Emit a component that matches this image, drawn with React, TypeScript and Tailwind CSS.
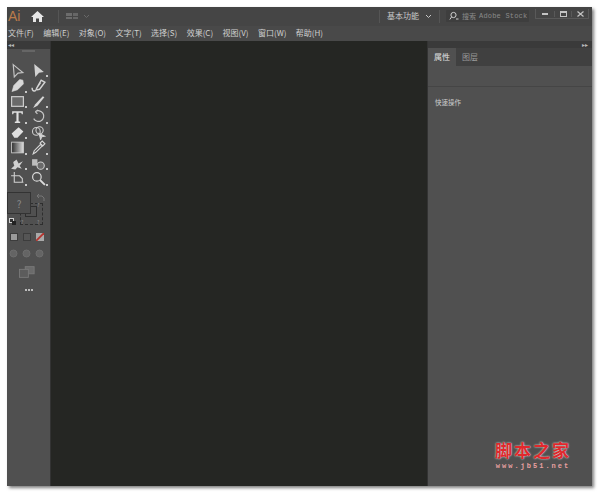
import React from 'react';

const cjk = { fontFamily: '"Noto Sans CJK SC", "Liberation Sans", sans-serif' };

const menus = ['文件(F)', '编辑(E)', '对象(O)', '文字(T)', '选择(S)', '效果(C)', '视图(V)', '窗口(W)', '帮助(H)'];

// two columns of tools, top to bottom
const tools: { icon: React.ReactNode; corner?: boolean }[] = [
  { icon: <path d="M3 1.5 L12 9 L7.5 9.5 L4 13 Z" fill="none" stroke="#c4c4c4" strokeWidth="1.1" /> },
  { icon: <path d="M3 1 L12 8.5 L7.5 9 L4 13 Z" fill="#d2d2d2" />, corner: true },
  { icon: <path d="M12 2 L9 1.5 L3.5 7 L2 12.5 L7 11 L12.5 5.5 Z M2 12.5 L6 8" fill="#d8d8d8" stroke="#d8d8d8" strokeWidth="0.6" />, corner: true },
  { icon: <path d="M1 9 C1 13 5 13 5 10 L9.5 2 L13 4 L8 10.5 L5.5 11 M5 10 L9 4" fill="none" stroke="#d4d4d4" strokeWidth="1.3" /> },
  { icon: <rect x="1.5" y="2.5" width="11" height="9" fill="#6a6a6a" stroke="#cfcfcf" strokeWidth="1.1" />, corner: true },
  { icon: <path d="M2 13 L4 9.5 L11 2 L12.5 3 L6 11 Z" fill="#d6d6d6" />, corner: true },
  { icon: <path d="M2 2 H12 V5 H11 L10.5 3.5 H8 V11.5 L9.5 12 V13 H4.5 V12 L6 11.5 V3.5 H3.5 L3 5 H2 Z" fill="#e0e0e0" />, corner: true },
  { icon: <path d="M4 2.5 A5 5 0 1 1 2.5 9 M4 2.5 L6.5 1 M4 2.5 L6 4.5" fill="none" stroke="#c8c8c8" strokeWidth="1.1" />, corner: true },
  { icon: <path d="M1.5 8 L8 2 L12.5 6 L7 12 L4 12 Z" fill="#e0e0e0" />, corner: true },
  { icon: <g fill="none" stroke="#cfcfcf" strokeWidth="1"><circle cx="5" cy="6" r="3.6" /><circle cx="8" cy="5" r="3.4" /><path d="M7.5 8 L13 10.5 L10 11 L9 13.5 Z" fill="#d4d4d4" /></g> },
  { icon: <rect x="1.5" y="2" width="11" height="10" fill="url(#tool-grad)" stroke="#cfcfcf" strokeWidth="0.8" />, corner: true },
  { icon: <path d="M2 13 L3 10 L9 4 L10.5 5.5 L4.5 11.5 Z M8.5 3 L10.5 1 L13 3.5 L11 5.5 Z" fill="none" stroke="#d8d8d8" strokeWidth="1" />, corner: true },
  { icon: <path d="M1 12 L4 9 L3 6 C4 4 6 5 6 3 L8 7 L12 5 L9 9 L11 12 L7 10.5 L5 12.5 Z" fill="#d0d0d0" />, corner: true },
  { icon: <g><rect x="1" y="3" width="5" height="6" fill="#bdbdbd" /><circle cx="9" cy="9" r="3.4" fill="#6a6a6a" stroke="#cfcfcf" /></g>, corner: true },
  { icon: <path d="M4 1 V10.5 H12.5 M1 4.5 H4 M4.5 4.5 H9 L11.5 7 V10" fill="none" stroke="#d0d0d0" strokeWidth="1" />, corner: true },
  { icon: <g fill="none" stroke="#dcdcdc"><circle cx="5.5" cy="5.5" r="4" strokeWidth="1.1" /><path d="M8.5 8.5 L13 13" strokeWidth="1.8" /></g>, corner: true },
];

function ToolGrid() {
  return (
    <div className="grid grid-cols-[21px_21px] gap-y-[1.5px] pt-[14px]">
      <svg width="0" height="0" className="absolute">
        <defs>
          <linearGradient id="tool-grad" x1="0" x2="1" y1="0" y2="0">
            <stop offset="0" stopColor="#2e2e2e" />
            <stop offset="1" stopColor="#dddddd" />
          </linearGradient>
        </defs>
      </svg>
      {tools.map((t, i) => (
        <div key={i} className="relative flex h-[14px] w-[20px] items-center justify-center">
          <svg width="15" height="15" viewBox="0 0 14 14">{t.icon}</svg>
          {t.corner && <span className="absolute bottom-0 right-0 h-[2px] w-[2px] bg-[#c8c8c8]" />}
        </div>
      ))}
    </div>
  );
}

function ColorBlock() {
  return (
    <div className="relative mt-[6.5px] h-[36px] w-[43px] text-[#8a8a8a]">
      <div className="absolute left-[13px] top-[11px] h-[22px] w-[23px] border border-dashed border-[#2e2e2e]" />
      <div className="absolute left-[18px] top-[14px] h-[11px] w-[12px] border border-[#2e2e2e]" />
      <span className="absolute left-[30px] top-[10px] text-[5px] leading-[6px]">?</span>
      <span className="absolute left-[14px] top-[27px] text-[5px] leading-[6px]">?</span>
      <span className="absolute left-[30px] top-[27px] text-[5px] leading-[6px]">?</span>
      <div className="absolute left-0 top-0 flex h-[22px] w-[24px] items-center justify-center border border-[#333333] bg-[#4e4e4e] text-[10px]">?</div>
      <svg className="absolute left-[29px] top-[1px]" width="9" height="9" viewBox="0 0 9 9">
        <path d="M1 3 H6 L8 5 V8 M3 1 L1 3 L3 5" fill="none" stroke="#777777" strokeWidth="1" />
      </svg>
      <div className="absolute left-[2px] top-[26px] h-[5px] w-[5px] border border-[#d0d0d0] bg-[#333333]" />
      <div className="absolute left-[5px] top-[29px] h-[4px] w-[4px] bg-[#222222]" />
    </div>
  );
}

function LeftToolbar() {
  return (
    <aside className="flex w-[43px] shrink-0 flex-col bg-[#505050]">
      <div className="flex h-[8px] items-center bg-[#3a3a3a] pl-[1px]">
        <span className="text-[6px] leading-none text-[#bbbbbb]">◂◂</span>
      </div>
      <div className="mx-auto mt-[1px] h-[2px] w-[13px] border-y border-[#666666]" />
      <div className="-mt-[3px]">
        <ToolGrid />
      </div>
      <ColorBlock />
      <div className="ml-[3px] mt-[5px] flex items-center gap-[5px]">
        <div className="h-[8px] w-[8px] border border-[#3c3c3c] bg-[#9a9a9a]" />
        <div className="h-[8px] w-[8px] border border-[#3c3c3c] bg-[#555555]" />
        <svg width="8" height="8" viewBox="0 0 9 9">
          <rect width="9" height="9" fill="#a9a9a9" />
          <path d="M0 9 L9 0" stroke="#b5322c" strokeWidth="2" />
        </svg>
      </div>
      <div className="ml-[2px] mt-[8px] flex items-center gap-[4px]">
        {[0, 1, 2].map(i => (
          <svg key={i} width="9" height="9" viewBox="0 0 9 9">
            <circle cx="4.5" cy="4.5" r="3.5" fill="#646464" stroke="#6e6e6e" />
          </svg>
        ))}
      </div>
      <svg className="ml-[12px] mt-[8px]" width="16" height="12" viewBox="0 0 18 13">
        <rect x="7" y="0.5" width="10" height="8" fill="#6b6b6b" stroke="#7a7a7a" />
        <rect x="0.5" y="3.5" width="10" height="9" fill="#5c5c5c" stroke="#7a7a7a" />
      </svg>
      <div className="mt-[11px] flex justify-center gap-[1px]">
        {[0, 1, 2].map(i => (
          <span key={i} className="h-[2px] w-[2px] rounded-full bg-[#e0e0e0]" />
        ))}
      </div>
    </aside>
  );
}

function RightPanel() {
  return (
    <aside className="flex w-[164px] shrink-0 flex-col bg-[#505050]" style={cjk}>
      <div className="flex h-[7px] items-center justify-end bg-[#3a3a3a] pr-[4px]">
        <span className="text-[6px] leading-none text-[#bbbbbb]">▸▸</span>
      </div>
      <div className="flex h-[18px] bg-[#404040] text-[8px] leading-none">
        <div className="flex w-[28px] items-center justify-center bg-[#505050] text-[#e2e2e2]">属性</div>
        <div className="flex w-[28px] items-center justify-center text-[#9a9a9a]">图层</div>
      </div>
      <div className="h-[21px] border-b border-[#454545]" />
      <div className="pl-[7px] pt-[10px] text-[6.5px] leading-[11px] text-[#cfcfcf]">快速操作</div>
    </aside>
  );
}

export default function App() {
  return (
    <div className="relative h-[493px] w-[600px] overflow-hidden bg-white pl-[7px] pt-[7px]" style={cjk}>
      <div className="flex h-[479px] w-[585px] flex-col bg-[#505050] shadow-[2px_2px_3px_rgba(0,0,0,0.5)]">
        {/* title bar */}
        <header className="flex h-[19px] shrink-0 items-center bg-[#454545] pb-[1px]">
          <span className="ml-[1px] w-[16px] text-[14px] leading-none text-[#bb7c4b]" style={{ fontFamily: '"Liberation Sans", sans-serif' }}>Ai</span>
          <svg className="ml-[7px]" width="13" height="11" viewBox="0 0 13 11">
            <path d="M6.5 0 L13 6 H11 V11 H8 V7.5 H5 V11 H2 V6 H0 Z" fill="#e6e6e6" />
          </svg>
          <div className="ml-[14px] h-[13px] w-px bg-[#555555]" />
          <div className="ml-[7px] grid h-[6px] w-[12px] grid-cols-2 gap-px">
            <span className="bg-[#6c6c6c]" /><span className="bg-[#666666]" />
            <span className="bg-[#6c6c6c]" /><span className="bg-[#666666]" />
          </div>
          <svg className="ml-[5px]" width="7" height="5" viewBox="0 0 7 5">
            <path d="M1 1 L3.5 3.5 L6 1" fill="none" stroke="#686868" />
          </svg>
          <div className="ml-auto flex items-center">
            <div className="h-[13px] w-px bg-[#555555]" />
            <span className="ml-[7px] text-[8px] leading-none text-[#c9c9c9]">基本功能</span>
            <svg className="ml-[6px]" width="7" height="5" viewBox="0 0 7 5">
              <path d="M1 1 L3.5 3.5 L6 1" fill="none" stroke="#c8c8c8" />
            </svg>
            <div className="ml-[7px] h-[13px] w-px bg-[#555555]" />
            <div className="ml-[6px] flex h-[12px] w-[83px] items-center rounded-[1px] bg-[#3e3e3e] pl-[3px]">
              <svg width="10" height="10" viewBox="0 0 10 10">
                <circle cx="4.5" cy="4" r="2.6" fill="none" stroke="#cfcfcf" />
                <path d="M2.5 6 L0.8 8.5 M7 8 H9.5" stroke="#cfcfcf" />
              </svg>
              <span className="ml-[3px] text-[7px] leading-none text-[#8a8a8a]">搜索</span>
              <span className="ml-[3px] text-[7px] leading-none tracking-[0.2px] text-[#8a8a8a]" style={{ fontFamily: '"Liberation Mono", monospace' }}>Adobe Stock</span>
            </div>
            <div className="mb-[4px] ml-[6px] flex h-[10px] items-center rounded-b-[1px] border-x border-b border-[#595959] text-[#cccccc]">
              <div className="flex w-[18px] justify-center"><span className="h-[2px] w-[6px] bg-[#c4c4c4]" /></div>
              <div className="flex w-[18px] justify-center border-x border-[#595959]"><span className="h-[6px] w-[7px] border border-t-2 border-[#c4c4c4]" /></div>
              <div className="flex w-[16px] justify-center">
                <svg width="7" height="6" viewBox="0 0 7 6"><path d="M0.5 0.5 L6.5 5.5 M6.5 0.5 L0.5 5.5" stroke="#c4c4c4" strokeWidth="1.2" /></svg>
              </div>
            </div>
            <div className="w-[3px]" />
          </div>
        </header>
        {/* menu bar */}
        <nav className="flex h-[15px] shrink-0 items-center gap-[9.4px] bg-[#494949] pb-[2px] pl-[1px] text-[8px] leading-none text-[#cfcfcf]">
          {menus.map(m => <span key={m}>{m}</span>)}
        </nav>
        {/* work area */}
        <main className="flex min-h-0 flex-1">
          <LeftToolbar />
          <div className="w-px bg-[#333333]" />
          <div className="flex-1 bg-[#252623]" />
          <div className="w-px bg-[#333333]" />
          <RightPanel />
        </main>
      </div>
      {/* site watermark */}
      <div className="absolute left-[495px] top-[437px] flex w-[76px] flex-col items-center">
        <span className="whitespace-nowrap text-[17px] font-bold leading-[25px] tracking-[2px] text-[#e0282c] [text-shadow:0_0_2px_#ffffff]" style={{ fontFamily: '"Noto Sans CJK SC", sans-serif' }}>脚本之家</span>
        <span className="whitespace-nowrap text-[7px] font-bold leading-[8px] tracking-[2px] text-[#e8a0a0]" style={{ fontFamily: '"Liberation Mono", monospace' }}>www.jb51.net</span>
      </div>
    </div>
  );
}
